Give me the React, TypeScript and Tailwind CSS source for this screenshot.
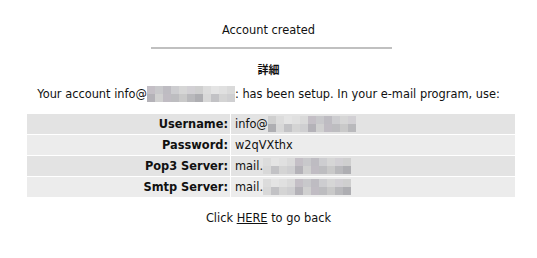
import React from 'react';

const blurA = ['#cdcdd0', '#dcdcdc', '#c4bfc6', '#d6d6d6', '#e4e4e4', '#c8c8cb', '#d2d0d4', '#e0e0e0', '#bebcc2', '#cfcfcf', '#dadada'];
const blurB = ['#b9b9bc', '#d4d4d4', '#c0bcc3', '#aeaeb2', '#cfcfd1', '#bdbdc0', '#d8d8d8', '#b4b2b8', '#c9c9c9', '#c2c2c5', '#d0d0d0'];

const Mosaic: React.FC<{ cols: number; seed?: number }> = ({ cols, seed = 0 }) => {
  const cells: string[] = [];
  for (let r = 0; r < 2; r++) {
    for (let c = 0; c < cols; c++) {
      const list = r === 0 ? blurA : blurB;
      cells.push(list[(c * 3 + r * 5 + seed) % list.length]);
    }
  }
  return (
    <span
      className="inline-grid align-middle"
      style={{ gridTemplateColumns: `repeat(${cols}, 8px)`, gridTemplateRows: 'repeat(2, 8px)' }}
    >
      {cells.map((c, i) => (
        <span key={i} style={{ background: c }} />
      ))}
    </span>
  );
};

const rows = [
  { label: 'Username:', value: 'info@', blur: 11, bg: 'bg-[#e3e3e3]' },
  { label: 'Password:', value: 'w2qVXthx', blur: 0, bg: 'bg-[#ececec]' },
  { label: 'Pop3 Server:', value: 'mail.', blur: 11, bg: 'bg-[#e3e3e3]' },
  { label: 'Smtp Server:', value: 'mail.', blur: 11, bg: 'bg-[#ececec]' },
];

export default function App() {
  return (
    <div className="w-[537px] h-[258px] bg-white text-[11.4px] text-[#111] font-['DejaVu_Sans','Verdana',sans-serif]">
      <div className="pt-[22px] text-center leading-[16px]">Account created</div>
      <div className="mt-[9px] ml-[151px] w-[241px] h-[2px] bg-[#c0c0c0]" />
      <div className="mt-[13px] text-center font-bold text-[11px] leading-[14px] font-['Noto_Sans_CJK_JP',sans-serif]">詳細</div>
      <div className="mt-[10px] text-center leading-[16px] flex justify-center items-center">
        <span>Your account info@</span>
        <Mosaic cols={11} seed={2} />
        <span>: has been setup. In your e-mail program, use:</span>
      </div>
      <table className="mt-[11px] ml-[26px] w-[490px] border-separate border-spacing-[1px]">
        <tbody>
          {rows.map((r) => (
            <tr key={r.label} className={`h-[20px] ${r.bg}`}>
              <td className="w-[203px] text-right font-bold pr-[2px] p-0 leading-[16px]">{r.label}</td>
              <td className="pl-[4px] p-0 leading-[16px]">
                <span className="flex items-center">
                  <span>{r.value}</span>
                  {r.blur > 0 && <Mosaic cols={r.blur} seed={r.label.length} />}
                </span>
              </td>
            </tr>
          ))}
        </tbody>
      </table>
      <div className="mt-[12px] text-center leading-[16px]">
        Click <span className="underline">HERE</span> to go back
      </div>
    </div>
  );
}
